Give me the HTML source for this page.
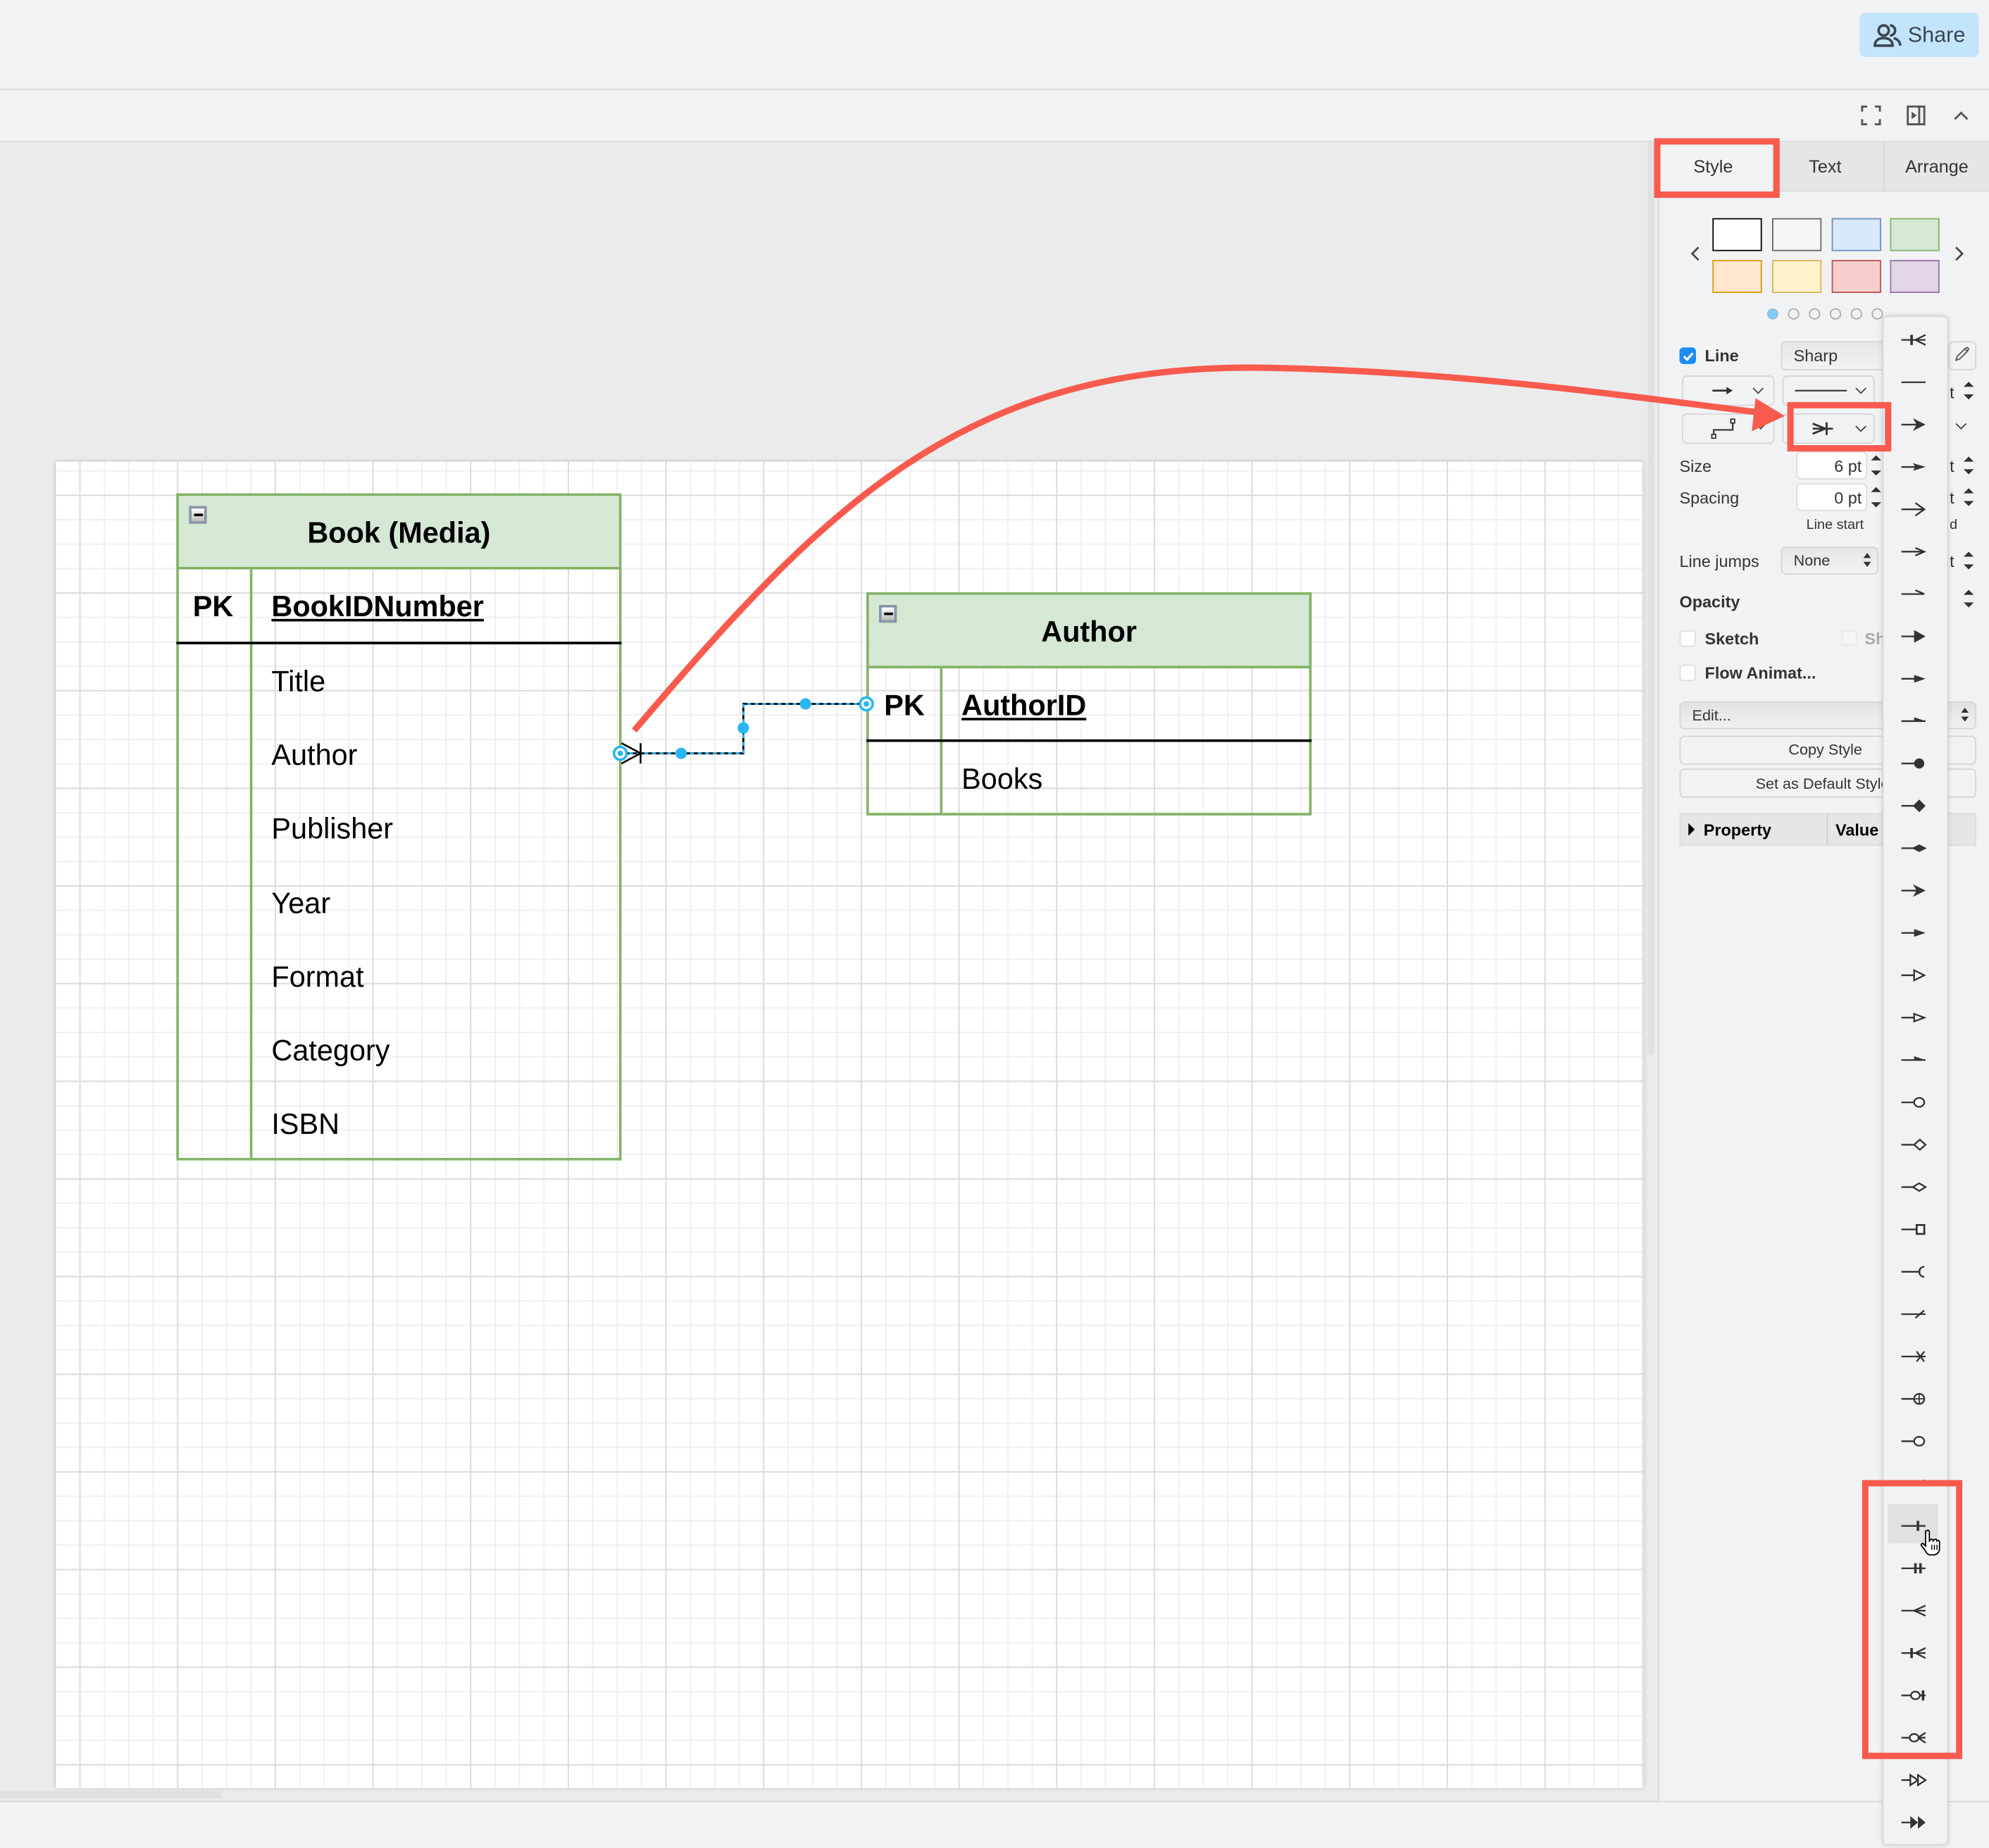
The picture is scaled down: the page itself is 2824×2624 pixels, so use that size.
<!DOCTYPE html>
<html><head><meta charset="utf-8">
<style>
html,body{margin:0;padding:0;width:2824px;height:2622px;overflow:hidden;background:#f1f2f4;}
#w{position:absolute;left:0;top:0;width:1568px;height:1456px;transform:scale(1.801,1.8008);transform-origin:0 0;font-family:"Liberation Sans",Arial,sans-serif;color:#333;}
.a{position:absolute;}
.page{left:44px;top:364px;width:1252px;height:1046px;background-color:#fff;
background-image:
linear-gradient(to right,#dcdcdc 1px,transparent 1px),
linear-gradient(to bottom,#dcdcdc 1px,transparent 1px),
linear-gradient(to right,#f0f0f0 1px,transparent 1px),
linear-gradient(to bottom,#f0f0f0 1px,transparent 1px);
background-size:77px 77px,77px 77px,19.25px 19.25px,19.25px 19.25px;
background-position:18.5px 26px,18.5px 26px,18.5px 26px,18.5px 26px;
box-shadow:0 0 3px rgba(0,0,0,.25);}
.tbl{border:2px solid #82b366;background:transparent;}
.hdr{background:#d5e8d4;border-bottom:2px solid #82b366;font-weight:bold;font-size:23px;color:#000;text-align:center;}
.t{font-size:23px;color:#000;}
.min{width:14px;height:14px;background:linear-gradient(#fff,#bbb);border:2px solid #8a93a6;box-sizing:border-box;}
.min:after{content:"";position:absolute;left:2px;top:4px;width:7px;height:2px;background:#000;}
.lbl{font-size:13px;color:#333;}
.btn{border:1px solid #d6d6d6;border-radius:4px;background:#f1f2f4;box-sizing:border-box;}
.red{border:5px solid #f85a4e;box-sizing:border-box;}
</style></head><body><div id="w">
<div class="a" style="left:0;top:0;width:1568px;height:70px;background:#f1f2f4;border-bottom:1px solid #d8d8d8;"></div>
<div class="a" style="left:1466px;top:10px;width:94px;height:35px;background:#c3e5fc;border-radius:5px;"></div>
<svg class="a" style="left:1476px;top:17px" width="24" height="22" viewBox="0 0 24 22"><circle cx="9" cy="7" r="4" fill="none" stroke="#3c4650" stroke-width="2"/><path d="M2 19c0-4 3-6 7-6s7 2 7 6z" fill="none" stroke="#3c4650" stroke-width="2"/><path d="M14 3a4 4 0 0 1 0 8M17 13c3 1 5 3 5 6" fill="none" stroke="#3c4650" stroke-width="2"/></svg>
<div class="a" style="left:1504px;top:18px;font-size:17px;color:#3c4650;">Share</div>
<div class="a" style="left:0;top:71px;width:1568px;height:40px;background:#f1f2f4;border-bottom:1px solid #dadada;"></div>
<svg class="a" style="left:1466px;top:82px" width="90" height="18" viewBox="0 0 90 18"><path d="M2 6V2h4M12 2h4v4M16 12v4h-4M6 16H2v-4" fill="none" stroke="#555" stroke-width="1.6"/><rect x="38" y="2" width="13" height="14" fill="none" stroke="#555" stroke-width="1.6"/><path d="M47 2v14" stroke="#555" stroke-width="1.6"/><path d="M41 6l4 3-4 3z" fill="#555"/><path d="M75 12l5-5 5 5" fill="none" stroke="#555" stroke-width="1.6"/></svg>
<div class="a" style="left:0;top:112px;width:1307px;height:1308px;background:#ebebeb;"></div>
<div class="a page"></div>
<div class="a" style="left:1299px;top:112px;width:5px;height:720px;background:#e0e0e0;border-radius:3px;"></div>
<div class="a" style="left:0;top:1412px;width:174px;height:6px;background:#e0e0e0;"></div>
<div class="a" style="left:0;top:1420px;width:1568px;height:36px;background:#f1f2f4;border-top:1px solid #d6d6d6;"></div>
<div class="a" style="left:1307px;top:112px;width:261px;height:1308px;background:#f1f2f4;border-left:1px solid #dadada;"></div>
<div class="a" style="left:1397px;top:112px;width:171px;height:38px;background:#e6e6e6;border-bottom:1px solid #dadada;"></div>
<div class="a" style="left:1485px;top:112px;width:1px;height:38px;background:#d6d6d6;"></div>
<div class="a" style="left:1335px;top:123px;font-size:14px;color:#333;">Style</div>
<div class="a" style="left:1426px;top:123px;font-size:14px;color:#333;">Text</div>
<div class="a" style="left:1502px;top:123px;font-size:14px;color:#333;">Arrange</div>
<svg class="a" style="left:1332px;top:194px" width="10" height="12"><path d="M7 1l-5 5 5 5" fill="none" stroke="#444" stroke-width="1.5"/></svg>
<svg class="a" style="left:1539px;top:194px" width="10" height="12"><path d="M3 1l5 5-5 5" fill="none" stroke="#444" stroke-width="1.5"/></svg>
<div class="a" style="left:1350px;top:172px;width:39px;height:26px;background:#fff;border:1px solid #000;box-sizing:border-box"></div>
<div class="a" style="left:1397px;top:172px;width:39px;height:26px;background:#f5f5f5;border:1px solid #666;box-sizing:border-box"></div>
<div class="a" style="left:1444px;top:172px;width:39px;height:26px;background:#dae8fc;border:1px solid #6c8ebf;box-sizing:border-box"></div>
<div class="a" style="left:1490px;top:172px;width:39px;height:26px;background:#d5e8d4;border:1px solid #82b366;box-sizing:border-box"></div>
<div class="a" style="left:1350px;top:205px;width:39px;height:26px;background:#ffe6cc;border:1px solid #d79b00;box-sizing:border-box"></div>
<div class="a" style="left:1397px;top:205px;width:39px;height:26px;background:#fff2cc;border:1px solid #d6b656;box-sizing:border-box"></div>
<div class="a" style="left:1444px;top:205px;width:39px;height:26px;background:#f8cecc;border:1px solid #b85450;box-sizing:border-box"></div>
<div class="a" style="left:1490px;top:205px;width:39px;height:26px;background:#e1d5e7;border:1px solid #9673a6;box-sizing:border-box"></div>
<svg class="a" style="left:1390px;top:242px" width="100" height="12"><circle cx="7.5" cy="5.5" r="4" fill="#7fcef8" stroke="#9ac" stroke-width=".6"/><circle cx="24" cy="5.5" r="4" fill="none" stroke="#aaa"/><circle cx="40.5" cy="5.5" r="4" fill="none" stroke="#aaa"/><circle cx="57" cy="5.5" r="4" fill="none" stroke="#aaa"/><circle cx="73.5" cy="5.5" r="4" fill="none" stroke="#aaa"/><circle cx="90" cy="5.5" r="4" fill="none" stroke="#aaa"/></svg>
<div class="a" style="left:1324px;top:274px;width:13px;height:13px;background:#1b8cf7;border-radius:3px;"></div>
<svg class="a" style="left:1325px;top:275px" width="12" height="12"><path d="M2.5 6l2.5 2.5 4.5-5" fill="none" stroke="#fff" stroke-width="1.8"/></svg>
<div class="a lbl" style="left:1344px;top:273px;font-weight:bold;">Line</div>
<div class="a btn" style="left:1404px;top:269px;width:90px;height:23px;background:linear-gradient(#e6e6e6,#f2f2f2);"></div>
<div class="a lbl" style="left:1414px;top:273px;">Sharp</div>
<div class="a btn" style="left:1536px;top:269px;width:22px;height:23px;"></div>
<svg class="a" style="left:1540px;top:272px" width="14" height="14"><path d="M2 12l1-3 6-6 2 2-6 6z M9 3l2-1 1 1-1 2" fill="none" stroke="#555"/></svg>
<div class="a btn" style="left:1326px;top:296px;width:73px;height:24px;"></div>
<svg class="a" style="left:1348px;top:302px" width="50" height="12"><path d="M2 6h14" stroke="#333" stroke-width="1.5"/><path d="M13 3l5 3-5 3z" fill="#333"/><path d="M34 4l4 4 4-4" fill="none" stroke="#444"/></svg>
<div class="a btn" style="left:1405px;top:296px;width:73px;height:24px;"></div>
<svg class="a" style="left:1412px;top:302px" width="64" height="12"><path d="M3 6h41" stroke="#333" stroke-width="1.2"/><path d="M51 4l4 4 4-4" fill="none" stroke="#444"/></svg>
<div class="a btn" style="left:1326px;top:326px;width:73px;height:24px;"></div>
<svg class="a" style="left:1348px;top:328px" width="50" height="20"><path d="M3 16v-5h15v-6" fill="none" stroke="#333" stroke-width="1.2"/><rect x="1.5" y="14.5" width="3" height="3" fill="#fff" stroke="#333"/><rect x="16.5" y="2.5" width="3" height="3" fill="#fff" stroke="#333"/><path d="M36 6l4 4 4-4" fill="none" stroke="#444"/></svg>
<div class="a btn" style="left:1405px;top:326px;width:73px;height:24px;"></div>
<svg class="a" style="left:1428px;top:330px" width="50" height="16"><path d="M1 8h16" stroke="#333" stroke-width="1.5"/><path d="M1 4l10 4-10 4" fill="none" stroke="#333" stroke-width="1.6"/><path d="M12 3v10" stroke="#333" stroke-width="1.6"/><path d="M35 6l4 4 4-4" fill="none" stroke="#444"/></svg>
<div class="a lbl" style="left:1324px;top:360px;">Size</div>
<div class="a" style="left:1416px;top:356px;width:56px;height:22px;background:#fff;border:1px solid #ddd;border-radius:4px;box-sizing:border-box;"></div>
<div class="a lbl" style="left:1446px;top:360px;">6 pt</div>
<div class="a lbl" style="left:1324px;top:385px;">Spacing</div>
<div class="a" style="left:1416px;top:381px;width:56px;height:22px;background:#fff;border:1px solid #ddd;border-radius:4px;box-sizing:border-box;"></div>
<div class="a lbl" style="left:1446px;top:385px;">0 pt</div>
<svg class="a" style="left:1474px;top:357px" width="10" height="50"><path d="M1 6l4-4 4 4zM1 14l4 4 4-4zM1 31l4-4 4 4zM1 39l4 4 4-4z" fill="#333"/></svg>
<div class="a" style="left:1424px;top:408px;font-size:11px;color:#333;">Line start</div>
<div class="a lbl" style="left:1324px;top:435px;">Line jumps</div>
<div class="a btn" style="left:1404px;top:431px;width:77px;height:22px;background:linear-gradient(#e6e6e6,#f2f2f2);"></div>
<div class="a" style="left:1414px;top:435px;font-size:12px;color:#333;">None</div>
<svg class="a" style="left:1468px;top:435px" width="8" height="14"><path d="M1 5l3-4 3 4zM1 8l3 4 3-4z" fill="#333"/></svg>
<div class="a lbl" style="left:1324px;top:467px;font-weight:bold;">Opacity</div>
<div class="a" style="left:1324px;top:497px;width:13px;height:13px;background:#fff;border:1px solid #ddd;border-radius:3px;box-sizing:border-box"></div>
<div class="a lbl" style="left:1344px;top:496px;font-weight:bold;">Sketch</div>
<div class="a" style="left:1452px;top:497px;width:12px;height:12px;background:#f6f6f6;border:1px solid #e8e8e8;border-radius:3px;box-sizing:border-box"></div>
<div class="a lbl" style="left:1470px;top:496px;font-weight:bold;color:#aaa;">Sh</div>
<div class="a" style="left:1324px;top:524px;width:13px;height:13px;background:#fff;border:1px solid #ddd;border-radius:3px;box-sizing:border-box"></div>
<div class="a lbl" style="left:1344px;top:523px;font-weight:bold;">Flow Animat...</div>
<div class="a btn" style="left:1324px;top:553px;width:234px;height:22px;background:linear-gradient(#e2e2e2,#f0f0f0);"></div>
<div class="a" style="left:1334px;top:557px;font-size:12px;color:#333;">Edit...</div>
<svg class="a" style="left:1545px;top:557px" width="8" height="14"><path d="M1 5l3-4 3 4zM1 8l3 4 3-4z" fill="#333"/></svg>
<div class="a btn" style="left:1324px;top:580px;width:234px;height:23px;"></div>
<div class="a" style="left:1410px;top:584px;font-size:12px;color:#333;">Copy Style</div>
<div class="a btn" style="left:1324px;top:606px;width:234px;height:23px;"></div>
<div class="a" style="left:1384px;top:611px;font-size:12px;color:#333;">Set as Default Style</div>
<div class="a" style="left:1324px;top:641px;width:234px;height:26px;background:#e6e6e6;border:1px solid #ddd;box-sizing:border-box;"></div>
<div class="a" style="left:1440px;top:642px;width:1px;height:24px;background:#d0d0d0;"></div>
<svg class="a" style="left:1331px;top:649px" width="6" height="10"><path d="M0 0l5 5-5 5z" fill="#000"/></svg>
<div class="a" style="left:1343px;top:647px;font-size:13px;font-weight:bold;color:#000;">Property</div>
<div class="a" style="left:1447px;top:647px;font-size:13px;font-weight:bold;color:#000;">Value</div>
<div class="a lbl" style="left:1537px;top:302px;">t</div>
<div class="a lbl" style="left:1537px;top:360px;">t</div>
<div class="a lbl" style="left:1537px;top:385px;">t</div>
<div class="a" style="left:1537px;top:408px;font-size:11px;">d</div>
<div class="a lbl" style="left:1537px;top:435px;">t</div>
<svg class="a" style="left:1547px;top:298px" width="10" height="190"><path d="M1 7l4-4 4 4zM1 13l4 4 4-4zM1 66l4-4 4 4zM1 72l4 4 4-4zM1 91l4-4 4 4zM1 97l4 4 4-4zM1 141l4-4 4 4zM1 147l4 4 4-4zM1 171l4-4 4 4zM1 177l4 4 4-4z" fill="#333"/></svg>
<svg class="a" style="left:1540px;top:330px" width="14" height="12"><path d="M2 4l4 4 4-4" fill="none" stroke="#444"/></svg>
<div class="a" style="left:1484px;top:249px;width:52px;height:1206px;background:#f1f2f4;border:1px solid #d8d8d8;border-radius:4px;box-sizing:border-box;box-shadow:0 0 4px rgba(0,0,0,.15);"></div>
<div class="a" style="left:1488px;top:1186px;width:40px;height:31px;background:#e1e1e1;"></div>
<svg class="a" id="mk" style="left:1484px;top:249px" width="52" height="1206"></svg>
<svg class="a" style="left:1513px;top:1205px" width="22" height="22" viewBox="0 0 22 22"><path d="M6 2c1-1 2 0 2 1v7l1-1c1-1 2 0 2 1l1-1c1-1 2 0 2 1 1-1 2 0 2 1v5c0 3-2 5-5 5h-2c-2 0-3-1-4-3l-3-4c-1-1 0-2 1-2l2 2V3c0-1 0-1 1-1z" fill="#fff" stroke="#000" stroke-width="1"/><path d="M10 13v4M12 13v4M14 13v4" stroke="#000" stroke-width=".8"/></svg>
<div class="a tbl" style="left:139px;top:389px;width:351px;height:526px;box-sizing:border-box;"></div>
<div class="a hdr" style="left:139px;top:389px;width:351px;height:60px;box-sizing:border-box;border:2px solid #82b366;line-height:58px;">Book (Media)</div>
<div class="a min" style="left:149px;top:399px;"></div>
<div class="a" style="left:197px;top:449px;width:2px;height:465px;background:#82b366;"></div>
<div class="a" style="left:139px;top:506px;width:351px;height:2px;background:#000;"></div>
<div class="a t" style="left:152px;top:465px;font-weight:bold;">PK</div>
<div class="a t" style="left:214px;top:465px;font-weight:bold;text-decoration:underline;">BookIDNumber</div>
<div class="a t" style="left:214px;top:524px;">Title</div>
<div class="a t" style="left:214px;top:582px;">Author</div>
<div class="a t" style="left:214px;top:640px;">Publisher</div>
<div class="a t" style="left:214px;top:699px;">Year</div>
<div class="a t" style="left:214px;top:757px;">Format</div>
<div class="a t" style="left:214px;top:815px;">Category</div>
<div class="a t" style="left:214px;top:873px;">ISBN</div>
<div class="a tbl" style="left:683px;top:467px;width:351px;height:176px;box-sizing:border-box;"></div>
<div class="a hdr" style="left:683px;top:467px;width:351px;height:60px;box-sizing:border-box;border:2px solid #82b366;line-height:58px;">Author</div>
<div class="a min" style="left:693px;top:477px;"></div>
<div class="a" style="left:741px;top:527px;width:2px;height:115px;background:#82b366;"></div>
<div class="a" style="left:683px;top:583px;width:351px;height:2px;background:#000;"></div>
<div class="a t" style="left:697px;top:543px;font-weight:bold;">PK</div>
<div class="a t" style="left:758px;top:543px;font-weight:bold;text-decoration:underline;">AuthorID</div>
<div class="a t" style="left:758px;top:601px;">Books</div>
<svg class="a" style="left:0;top:0" width="1568" height="1456">
<path d="M490 594H586V555H683" fill="none" stroke="#000" stroke-width="1.6"/>
<path d="M490 594H586V555H683" fill="none" stroke="#29b6f2" stroke-width="1.6" stroke-dasharray="3 3"/>
<path d="M490 586l15 8-15 8M505 586v16" fill="none" stroke="#000" stroke-width="1.4"/>
<circle cx="489" cy="594" r="5" fill="#fff" stroke="#29b6f2" stroke-width="2"/><circle cx="489" cy="594" r="2.2" fill="#29b6f2"/>
<circle cx="683" cy="555" r="5" fill="#fff" stroke="#29b6f2" stroke-width="2"/><circle cx="683" cy="555" r="2.2" fill="#29b6f2"/>
<circle cx="537" cy="594" r="4.5" fill="#29b6f2"/><circle cx="586" cy="574" r="4.5" fill="#29b6f2"/><circle cx="635" cy="555" r="4.5" fill="#29b6f2"/>
<path d="M500 576C650 400 760 285 1000 290C1150 293 1280 312 1385 325" fill="none" stroke="#f85a4e" stroke-width="5"/>
<path d="M1407 328L1384 314L1381 340z" fill="#f85a4e"/>
</svg>
<div class="a red" style="left:1304px;top:109px;width:99px;height:47px;"></div>
<div class="a red" style="left:1409px;top:317px;width:82px;height:39px;"></div>
<div class="a red" style="left:1468px;top:1167px;width:79px;height:220px;"></div>
</div>
<script>
(function(){
var s=document.getElementById('mk'),h='',C='#333';
function L(y,x2){return '<path d="M15 '+y+'H'+x2+'" stroke="'+C+'" stroke-width="1.3"/>';}
var t=['ERmandMany','none','classic','classicThin','open','openThin','openAsync','block','blockThin','async','oval','diamond','diamondThin','classic2','blockThin2','blockH','blockThinH','asyncThin','ovalH','diamondH','diamondThinH','box','halfCircle','dash','cross','circlePlus','circle','tick','ERone','ERmandOne','ERmany','ERoneToMany','ERzeroToOne','ERzeroToMany','dblBlockH','dblBlock'];
for(var i=0;i<t.length;i++){
 var y=19+i*33.4,k=t[i],g='';
 switch(k){
 case 'none':g=L(y,34);break;
 case 'classic':case 'classic2':g=L(y,30)+'<path d="M24 '+(y-5)+'L34 '+y+'L24 '+(y+5)+'L27 '+y+'z" fill="'+C+'"/>';break;
 case 'classicThin':g=L(y,30)+'<path d="M24 '+(y-3)+'L34 '+y+'L24 '+(y+3)+'L26 '+y+'z" fill="'+C+'"/>';break;
 case 'open':g=L(y,33)+'<path d="M26 '+(y-5)+'L33 '+y+'L26 '+(y+5)+'" fill="none" stroke="'+C+'" stroke-width="1.3"/>';break;
 case 'openThin':g=L(y,33)+'<path d="M26 '+(y-3)+'L33 '+y+'L26 '+(y+3)+'" fill="none" stroke="'+C+'" stroke-width="1.3"/>';break;
 case 'openAsync':g=L(y,33)+'<path d="M26 '+(y-3)+'L33 '+y+'" fill="none" stroke="'+C+'" stroke-width="1.3"/>';break;
 case 'block':g=L(y,28)+'<path d="M25 '+(y-5)+'L34 '+y+'L25 '+(y+5)+'z" fill="'+C+'"/>';break;
 case 'blockThin':case 'blockThin2':g=L(y,28)+'<path d="M25 '+(y-3)+'L34 '+y+'L25 '+(y+3)+'z" fill="'+C+'"/>';break;
 case 'async':case 'asyncThin':g=L(y,34)+'<path d="M25 '+(y-3)+'L34 '+y+'L25 '+y+'z" fill="'+C+'"/>';break;
 case 'blockH':g=L(y,25)+'<path d="M25 '+(y-4)+'L33 '+y+'L25 '+(y+4)+'z" fill="#fff" stroke="'+C+'" stroke-width="1.3"/>';break;
 case 'blockThinH':g=L(y,25)+'<path d="M25 '+(y-3)+'L33 '+y+'L25 '+(y+3)+'z" fill="#fff" stroke="'+C+'" stroke-width="1.3"/>';break;
 case 'oval':g=L(y,26)+'<circle cx="29" cy="'+y+'" r="4" fill="'+C+'"/>';break;
 case 'ovalH':case 'circle':g=L(y,25)+'<ellipse cx="29" cy="'+y+'" rx="4" ry="3.5" fill="#fff" stroke="'+C+'" stroke-width="1.3"/>';break;
 case 'diamond':g=L(y,25)+'<path d="M24 '+y+'L29 '+(y-5)+'L34 '+y+'L29 '+(y+5)+'z" fill="'+C+'"/>';break;
 case 'diamondThin':g=L(y,25)+'<path d="M23 '+y+'L29 '+(y-3)+'L35 '+y+'L29 '+(y+3)+'z" fill="'+C+'"/>';break;
 case 'diamondH':g=L(y,25)+'<path d="M25 '+y+'L29.5 '+(y-4)+'L34 '+y+'L29.5 '+(y+4)+'z" fill="#fff" stroke="'+C+'" stroke-width="1.3"/>';break;
 case 'diamondThinH':g=L(y,25)+'<path d="M24 '+y+'L29 '+(y-3)+'L34 '+y+'L29 '+(y+3)+'z" fill="#fff" stroke="'+C+'" stroke-width="1.3"/>';break;
 case 'box':g=L(y,27)+'<rect x="27" y="'+(y-3.5)+'" width="6" height="7" fill="#fff" stroke="'+C+'" stroke-width="1.5"/>';break;
 case 'halfCircle':g=L(y,30)+'<path d="M33 '+(y-4)+'A4 4 0 0 0 33 '+(y+4)+'" fill="none" stroke="'+C+'" stroke-width="1.3"/>';break;
 case 'dash':g=L(y,34)+'<path d="M26 '+(y+3)+'L33 '+(y-3)+'" stroke="'+C+'" stroke-width="1.3"/>';break;
 case 'cross':g=L(y,34)+'<path d="M27 '+(y-4)+'L33 '+(y+4)+'M27 '+(y+4)+'L33 '+(y-4)+'" stroke="'+C+'" stroke-width="1.3"/>';break;
 case 'circlePlus':g=L(y,25)+'<circle cx="29" cy="'+y+'" r="4" fill="#fff" stroke="'+C+'" stroke-width="1.3"/><path d="M29 '+(y-4)+'v8M25 '+y+'h8" stroke="'+C+'" stroke-width="1"/>';break;
 case 'tick':g='<path d="M33 '+(y-3)+'v3" stroke="'+C+'" stroke-width="1.5"/>';break;
 case 'ERone':g=L(y,34)+'<path d="M28 '+(y-4)+'v8" stroke="'+C+'" stroke-width="2"/>';break;
 case 'ERmandOne':g=L(y,34)+'<path d="M26 '+(y-4)+'v8M30 '+(y-4)+'v8" stroke="'+C+'" stroke-width="2"/>';break;
 case 'ERmany':g=L(y,34)+'<path d="M34 '+(y-4)+'L25 '+y+'L34 '+(y+4)+'" fill="none" stroke="'+C+'" stroke-width="1.3"/>';break;
 case 'ERoneToMany':case 'ERmandMany':g=L(y,34)+'<path d="M34 '+(y-4)+'L26 '+y+'L34 '+(y+4)+'" fill="none" stroke="'+C+'" stroke-width="1.3"/><path d="M23 '+(y-4)+'v8" stroke="'+C+'" stroke-width="2"/>';break;
 case 'ERzeroToOne':g=L(y,34)+'<ellipse cx="26" cy="'+y+'" rx="3.5" ry="3" fill="#fff" stroke="'+C+'" stroke-width="1.3"/><path d="M32 '+(y-4)+'v8" stroke="'+C+'" stroke-width="2"/>';break;
 case 'ERzeroToMany':g=L(y,34)+'<path d="M34 '+(y-4)+'L28 '+y+'L34 '+(y+4)+'" fill="none" stroke="'+C+'" stroke-width="1.3"/><ellipse cx="25" cy="'+y+'" rx="3.5" ry="3" fill="#fff" stroke="'+C+'" stroke-width="1.3"/>';break;
 case 'dblBlockH':g=L(y,22)+'<path d="M22 '+(y-4)+'L28 '+y+'L22 '+(y+4)+'zM28 '+(y-4)+'L34 '+y+'L28 '+(y+4)+'z" fill="#fff" stroke="'+C+'" stroke-width="1.3"/>';break;
 case 'dblBlock':g=L(y,22)+'<path d="M22 '+(y-5)+'L28 '+y+'L22 '+(y+5)+'zM28 '+(y-5)+'L34 '+y+'L28 '+(y+5)+'z" fill="'+C+'"/>';break;
 }
 h+=g;
}
s.innerHTML=h;
})();
</script>
</body></html>
